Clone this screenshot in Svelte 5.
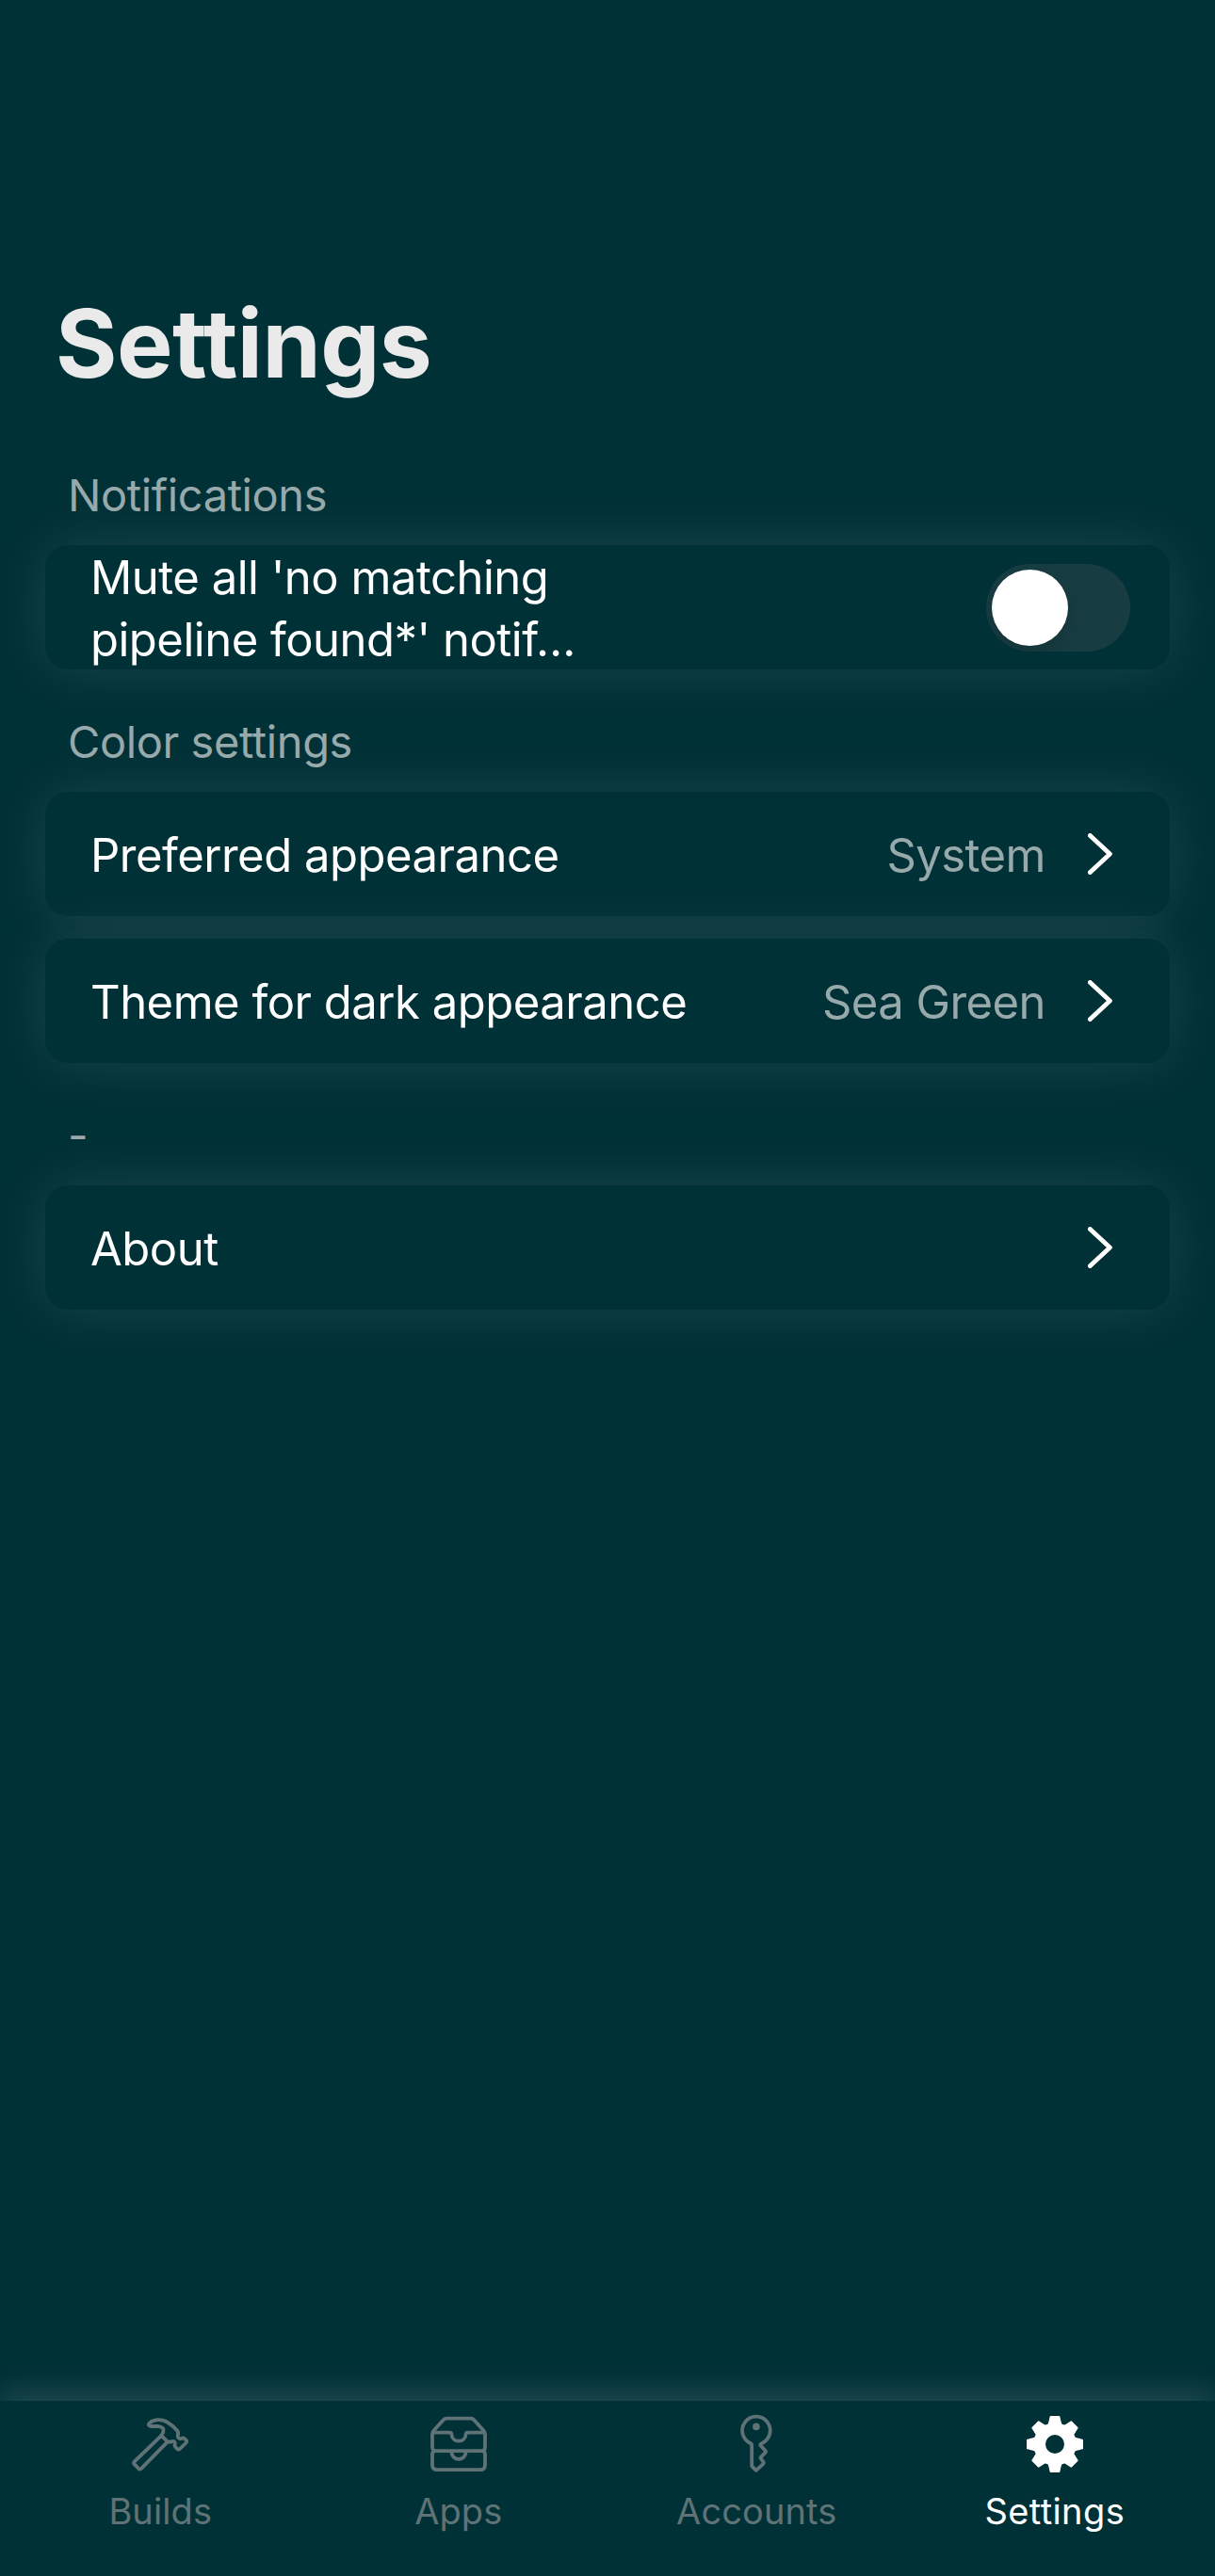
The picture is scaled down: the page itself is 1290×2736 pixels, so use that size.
<script>
  const groups = [
    {
      title: 'Notifications',
      rows: [{ lines: ["Mute all 'no matching", "pipeline found*' notif…"], kind: 'toggle' }]
    },
    {
      title: 'Color settings',
      rows: [
        { lines: ['Preferred appearance'], value: 'System' },
        { lines: ['Theme for dark appearance'], value: 'Sea Green' }
      ]
    },
    { title: '-', rows: [{ lines: ['About'] }] }
  ];

  const tabs = ['Builds', 'Apps', 'Accounts', 'Settings'];
  const active = 'Settings';

  // Outline of an eight-toothed cog centred on 30,30
  const profile = [
    [-9, 19.6],
    [-6.2, 21.2],
    [-4.4, 29],
    [4.4, 29],
    [6.2, 21.2],
    [9, 19.6]
  ];
  const cog = Array.from({ length: 8 }, (_, i) => {
    const a = (i * Math.PI) / 4;
    return profile
      .map(([x, r]) => {
        const px = 30 + x * Math.cos(a) + r * Math.sin(a);
        const py = 30 + x * Math.sin(a) - r * Math.cos(a);
        return `${px.toFixed(2)} ${py.toFixed(2)}`;
      })
      .join('L');
  }).join('L');
  const gearPath = `M${cog}ZM30 19a11 11 0 1 0 0 22a11 11 0 1 0 0-22Z`;
</script>

<div class="screen">
  <main>
    <h1>Settings</h1>
    {#each groups as group}
      <section>
        <h2>{group.title}</h2>
        <div class="cards">
          {#each group.rows as row}
            <div class="card">
              <div class="label">
                {#each row.lines as line}<span>{line}</span>{/each}
              </div>
              {#if row.kind === 'toggle'}
                <div class="track" role="switch" aria-checked="false" tabindex="0" aria-label="Mute">
                  <div class="knob"></div>
                </div>
              {:else}
                <div class="trail">
                  {#if row.value}<span class="value">{row.value}</span>{/if}
                  <svg class="chevron" viewBox="0 0 26 44"><path d="M2.4 2.4L23.4 22L2.4 41.6" /></svg>
                </div>
              {/if}
            </div>
          {/each}
        </div>
      </section>
    {/each}
  </main>

  <nav>
    {#each tabs as tab}
      <div class="tab" class:active={tab === active}>
        <svg class="icon" viewBox="0 0 60 60">
          {#if tab === 'Builds'}
            <path d="M31.3 20.8L2.8 48.3Q1.3 49.8 2.8 51.4L7 55.8Q8.5 57.3 10 55.8L38 27.3ZM31.3 20.8Q33.8 17.5 33.6 14.3Q32.5 11.3 27 10.9L20 11Q16.2 10 18.6 7.6C23 3.6 31 3 37 6.2C41 8.4 45.5 12.6 48.3 15.8Q49.8 17.8 48.7 20.5C48.4 23.3 50.5 24.6 52.6 24Q54.6 22.8 56.2 24.3L57.8 26Q58.8 27.3 57.6 28.5L51 35Q49.6 36.2 48.2 35L46.2 33Q45 31.8 45.7 29.8C46 27.3 44.6 26.5 42.5 27Q40.5 28.2 38 27.3" />
          {:else if tab === 'Apps'}
            <path d="M2 19Q2 17 3.5 15.5L13.5 4.5Q15 2.7 17.5 2.7H42.5Q45 2.7 46.5 4.5L56.5 15.5Q58 17 58 19V33Q58 37.2 54.5 37.2H5.5Q2 37.2 2 33ZM2.4 17.6H20.5Q22.4 17.6 22.4 19.5C22.8 29 37.2 29 37.6 19.5Q37.6 17.6 39.5 17.6H57.6M5.5 37.2Q2 37.2 2 41V52Q2 57.2 7 57.2H53Q58 57.2 58 52V41Q58 37.2 54.5 37.2M22.4 37.8C22.6 48.5 37.4 48.5 37.6 37.8" />
          {:else if tab === 'Accounts'}
            <path d="M25.2 30.5Q25.2 29.7 23.8 29A14.8 14.8 0 1 1 36 29Q34.2 29.8 34.2 31L39.7 37Q40.4 37.8 39.7 38.6L34.4 44.3L37.6 49.1Q38.2 50 37.4 50.8L29.8 57.8L25.8 53.8Q25.2 53.2 25.2 52.5Z" />
            <circle class="dot" cx="29.9" cy="11.4" r="3.8" />
          {:else}
            <path class="solid" d={gearPath} />
          {/if}
        </svg>
        <span>{tab}</span>
      </div>
    {/each}
  </nav>
</div>

<style>
  :global(body) {
    background: #003137;
  }
  .screen {
    box-sizing: border-box;
    width: 1290px;
    height: 2736px;
    display: flex;
    flex-direction: column;
    overflow: hidden;
    background: #003137;
    color: #fff;
    font-family: Inter, 'Liberation Sans', sans-serif;
  }
  main {
    flex: 1;
    padding: 305px 48px 0;
  }
  h1 {
    margin: 0 0 24px 11px;
    font-size: 100px;
    line-height: 120px;
    font-weight: 700;
    letter-spacing: -0.5px;
    color: #eaeaea;
  }
  h2 {
    margin: 0;
    height: 130px;
    box-sizing: border-box;
    padding: 47px 0 0 24px;
    font-size: 47px;
    line-height: 60px;
    font-weight: 400;
    letter-spacing: -0.4px;
    color: #97a9ab;
  }
  .cards {
    display: flex;
    flex-direction: column;
    gap: 24px;
  }
  .card {
    box-sizing: border-box;
    height: 132px;
    padding: 0 42px 0 48px;
    display: flex;
    align-items: center;
    justify-content: space-between;
    border-radius: 24px;
    background: #003137;
    box-shadow: 0 0 60px rgba(255, 255, 255, 0.095);
  }
  .label {
    display: flex;
    flex-direction: column;
    padding-top: 3px;
    font-size: 49px;
    line-height: 66px;
    letter-spacing: -0.5px;
    white-space: nowrap;
  }
  .track {
    box-sizing: border-box;
    width: 153px;
    height: 93px;
    padding: 6px;
    border-radius: 47px;
    background: #173d43;
    overflow: hidden;
  }
  .knob {
    width: 81px;
    height: 81px;
    border-radius: 50%;
    background: #fff;
    box-shadow: 0 9px 24px rgba(0, 0, 0, 0.15);
  }
  .trail {
    display: flex;
    align-items: center;
    gap: 45px;
    padding-right: 19px;
  }
  .value {
    padding-top: 3px;
    font-size: 49px;
    line-height: 66px;
    letter-spacing: -0.55px;
    color: #97a9ab;
  }
  .chevron {
    width: 26px;
    height: 44px;
  }
  .chevron path {
    fill: none;
    stroke: #fff;
    stroke-width: 4.8;
    stroke-linecap: round;
    stroke-linejoin: round;
  }
  nav {
    box-sizing: border-box;
    height: 186px;
    padding: 16px 12px 0;
    display: grid;
    grid-template-columns: repeat(4, 1fr);
    background: #003137;
    box-shadow: 0 -9px 30px rgba(255, 255, 255, 0.13);
  }
  .tab {
    display: flex;
    flex-direction: column;
    align-items: center;
    gap: 17px;
    color: #5f7376;
    font-size: 38px;
    line-height: 48px;
    letter-spacing: 0.1px;
  }
  .tab.active {
    color: #fff;
    letter-spacing: 0.4px;
  }
  .icon {
    width: 60px;
    height: 60px;
    overflow: visible;
  }
  .icon path {
    fill: none;
    stroke: currentColor;
    stroke-width: 3.8;
    stroke-linecap: round;
    stroke-linejoin: round;
  }
  .icon .dot {
    fill: currentColor;
  }
  .icon .solid {
    fill: currentColor;
    fill-rule: evenodd;
    stroke-width: 2;
  }
</style>
